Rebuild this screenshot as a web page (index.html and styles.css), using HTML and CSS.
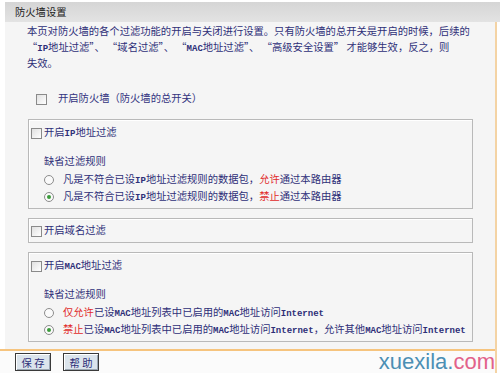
FILE: index.html
```html
<!DOCTYPE html>
<html lang="zh-CN">
<head>
    <meta charset="UTF-8">
    <title>防火墙设置</title>
<link rel="stylesheet" href="styles.css">
</head>
<body>
    <div class="title">防火墙设置</div>
    <div class="frame">
        <div class="panel">
            <p class="intro">本页对防火墙的各个过滤功能的开启与关闭进行设置。只有防火墙的总开关是开启的时候，后续的<br>“<span class="en">IP</span>地址过滤”、 “域名过滤”、 “<span class="en">MAC</span>地址过滤”、 “高级安全设置” 才能够生效，反之，则<br>失效。</p>

            <div class="row master"><span class="check"></span>开启防火墙（防火墙的总开关）</div>

            <div class="group">
                <div class="row head"><span class="check"></span>开启<span class="en">IP</span>地址过滤</div>
                <div class="rule">缺省过滤规则</div>
                <div class="row option"><span class="radio"></span>凡是不符合已设<span class="en">IP</span>地址过滤规则的数据包，<em>允许</em>通过本路由器</div>
                <div class="row option"><span class="radio on"></span>凡是不符合已设<span class="en">IP</span>地址过滤规则的数据包，<em>禁止</em>通过本路由器</div>
            </div>

            <div class="group single">
                <div class="row head"><span class="check"></span>开启域名过滤</div>
            </div>

            <div class="group">
                <div class="row head"><span class="check"></span>开启<span class="en">MAC</span>地址过滤</div>
                <div class="rule">缺省过滤规则</div>
                <div class="row option"><span class="radio"></span><em>仅允许</em>已设<span class="en">MAC</span>地址列表中已启用的<span class="en">MAC</span>地址访问<span class="en">Internet</span></div>
                <div class="row option"><span class="radio on"></span><em>禁止</em>已设<span class="en">MAC</span>地址列表中已启用的<span class="en">MAC</span>地址访问<span class="en">Internet</span>，允许其他<span class="en">MAC</span>地址访问<span class="en">Internet</span></div>
            </div>
        </div>

        <div class="footer">
            <button class="button" type="button">保 存</button>
            <button class="button" type="button">帮 助</button>
            <span class="mark">xuexila.<span class="com">com</span></span>
        </div>
    </div>
</body>
</html>
```

FILE: styles.css
```css
* {
    box-sizing: border-box;
}

body {
    margin: 0;
    background-color: #fff;
    font-family: "Noto Sans CJK SC", "Liberation Sans", sans-serif;
    font-size: 10.3px;
    color: #2e2f78;
}

.en {
    font-family: "Liberation Mono", monospace;
    font-size: 9px;
    font-weight: bold;
    line-height: 1;
}

.title {
    margin: 2px 0 0 5px;
    height: 20px;
    line-height: 20px;
    padding-left: 10px;
    color: #222;
    background: linear-gradient(#d5d5d5, #e3e3e3);
}

.frame {
    width: 497px;
    border-right: 2px solid #f4d3a4;
}

.panel {
    margin-left: 5px;
    padding: 1px 22px 7px 22px;
    background-color: #f5f5f5;
}

.intro {
    margin: 0;
    line-height: 16px;
}

.row {
    display: flex;
    align-items: baseline;
    height: 18px;
    white-space: nowrap;
}

.master {
    margin: 19px 0 11px 9px;
    color: #333380;
}

.master .check {
    margin-right: 11px;
}

.check {
    align-self: center;
    width: 11px;
    height: 11px;
    margin-right: 2px;
    border: 1px solid #8a8a8a;
    background: linear-gradient(135deg, #e0e0e0, #fff);
}

.group {
    margin: 0 0 9px 1px;
    padding: 4px 2px 3px;
    border: 1px solid #b9b9b9;
    box-shadow: inset 1px 1px 0 #fff;
}

.group:last-child {
    margin-bottom: 0;
}

.group.single {
    padding: 3px 2px 2px;
}

.rule {
    margin: 11px 0 2px 13px;
    line-height: 16px;
}

.option {
    height: 17px;
    padding-left: 13px;
}

.radio {
    position: relative;
    flex: none;
    align-self: center;
    width: 10px;
    height: 10px;
    margin-right: 9px;
    border: 1px solid #8c8c8c;
    border-radius: 50%;
    background-color: #fafafa;
}

.radio.on::after {
    content: "";
    position: absolute;
    left: 2px;
    top: 2px;
    width: 4px;
    height: 4px;
    border-radius: 50%;
    background-color: #3b9b3b;
}

em {
    font-style: normal;
    color: #e12b2b;
}

.footer {
    display: flex;
    align-items: flex-start;
    gap: 12px;
    height: 24px;
    padding: 2px 0 0 15px;
    border-top: 2px solid #f6c47e;
    background-color: #fbfbfb;
}

.button {
    width: 36px;
    height: 18px;
    padding: 0;
    font-family: inherit;
    font-size: 10.3px;
    color: #2e2f78;
    border: 1px solid #3a3a3a;
    box-shadow: inset 1px 1px 0 #fff, inset -1px -1px 0 #9aa6b2;
    background-color: #dbe4ec;
}

.mark {
    margin: -3px 0 0 auto;
    line-height: 24px;
    font-family: "Liberation Sans", sans-serif;
    font-size: 22px;
    color: #4c8fb4;
}

.mark .com {
    color: #e2628a;
}
```
